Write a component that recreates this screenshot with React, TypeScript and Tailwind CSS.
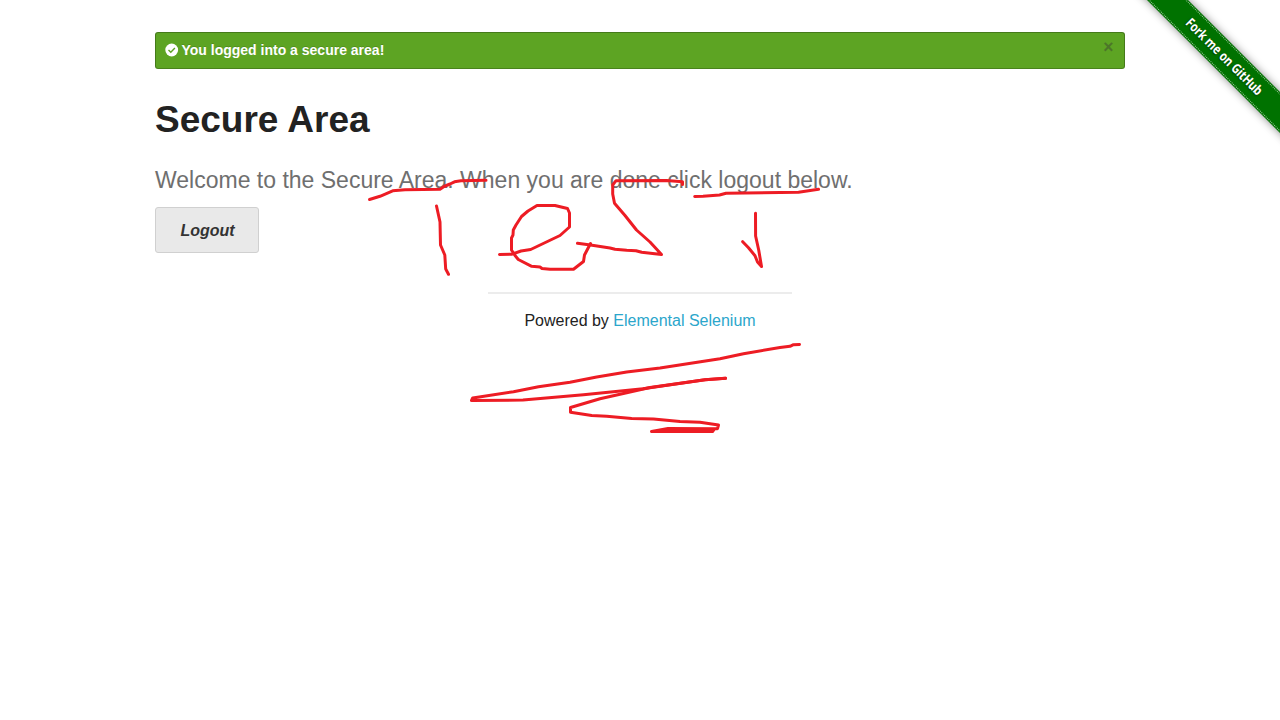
const strokes = [
  'M369.5 199.5 380 196.3 392.7 190.8 405 189.7 440 189.3 444 186.5 450 184 454.5 181.8 461 180.8 486 180.3',
  'M436.5 206 440 222 440.5 245 444.8 255 445.7 269 448.5 274.3',
  'M499.5 254.5 511.5 254.3 521 251 530.7 249.5 560 235.5 569.5 227 569.5 213 567.5 208.5 555 205.5 537 205.5 528 211 521.5 216.5 516 225 513.3 230 513 235 511.5 238 511.5 250 515 255.5 518.3 259.5 531.7 266.3 540 267 542 268.5 550 269.3 573.5 269.3 583.5 261.5 584.5 255 590.5 243.5',
  'M577.5 243.3 590.5 245 610 248 615 249.3 626.7 250.3 636 250.7 641.7 252.3 661.5 254.5 650 242 636.5 230 625 215.5 614.5 203.3 612.7 194 612.7 185 616 180.7 666.5 180.5 682.5 181.7 682.5 184.5',
  'M694.7 196.5 703 196.3 719.5 195 726 193.2 798.5 192.3 818.5 189.3',
  'M755.5 213.3 755.6 236 758.7 250 761.5 266.5 757.5 262 755 255.7 748.5 247.7 742.7 241.7',
  'M799.5 344.5 793.5 344.7 790 346.3 780 347.5 743.5 353.7 720 358.8 660 368 626.7 372 596.7 377 570 382.3 538.5 386.7 513.5 391.7 472.7 398 471.5 400.5 523 400 583.5 394.7 643 388.7 705 379.7 725.5 378.3',
  'M725.5 378.3 705 379.7 650 387.5 626.7 392.7 600 398.7 570.5 407.5 570.5 412.3 591.7 415.5 606.7 416.2 631.7 418.5 653.5 419 680 421.5 700 422.3 718.5 425 717.5 428.7 668 428.5 651.5 431.5 712.5 431.5 714 429.5 662 430.2',
];

export default function App() {
  return (
    <div className="relative h-[720px] w-full overflow-hidden bg-white font-['Liberation_Sans',Arial,sans-serif] text-[#222]">
      <div className="mx-auto w-[970px] pt-8">
        <div className="flex h-[36.5px] justify-between rounded-[3px] border border-[#457a1a] border-b-[#457a1a]/80 bg-[#5da423] pr-[10.5px] pl-[9px] text-white">
          <div className="flex h-[34px] items-center gap-[3px] text-[14px] font-bold">
            <svg className="size-[14px]" viewBox="0 0 14 14">
              <circle cx="6.7" cy="7" r="6.4" fill="white" />
              <path d="m3.5 7 2.3 2.3 4.1-4.2" fill="none" stroke="#5da423" strokeWidth="1.4" />
            </svg>
            <span className="-ml-[0.5px] [text-shadow:0_-1px_rgba(0,0,0,.15)]">You logged into a secure area!</span>
          </div>
          <button className="h-[28px] text-[17.5px] leading-[28px] font-bold text-[#333] opacity-40">×</button>
        </div>
        <h1 className="mt-[24.5px] text-[37px] leading-[54px] font-bold">Secure Area</h1>
        <p className="mt-[15px] text-[23px] leading-[37px] text-[#6f6f6f]">Welcome to the Secure Area. When you are done click logout below.</p>
        <button className="mt-[8px] flex h-[45.5px] w-[104px] items-center justify-center rounded-[3px] border border-[#d0d0d0] bg-[#e9e9e9] pt-[2px] pl-[1px] text-[16px] font-bold text-[#333] italic">Logout</button>
        <footer className="mx-auto mt-[39.5px] w-[304px] border-t-2 border-[#ececec] pt-[14px] text-center text-[16px] leading-[26px]">
          Powered by <a className="text-[#2ba6cb]">Elemental Selenium</a>
        </footer>
      </div>
      <div className="absolute top-[42px] left-[1098.5px] flex h-[29px] w-[250px] rotate-45 items-center justify-center bg-[#007200] shadow-[0_0_8px_rgba(0,0,0,.45)]">
        <div className="flex h-[27px] w-full items-center justify-center border-y border-dotted border-white/60">
          <span className="scale-x-[.81] font-['Noto_Sans'] text-[13.5px] font-bold whitespace-nowrap text-white [text-shadow:0_1px_2px_rgba(0,0,0,.5)]">Fork me on GitHub</span>
        </div>
      </div>
      <svg className="pointer-events-none absolute top-0 left-0" width="1280" height="720" viewBox="0 0 1280 720" fill="none" stroke="#ed1c24" strokeWidth="3" strokeLinecap="round" strokeLinejoin="round">
        {strokes.map((d) => <path key={d} d={d} />)}
      </svg>
    </div>
  );
}
